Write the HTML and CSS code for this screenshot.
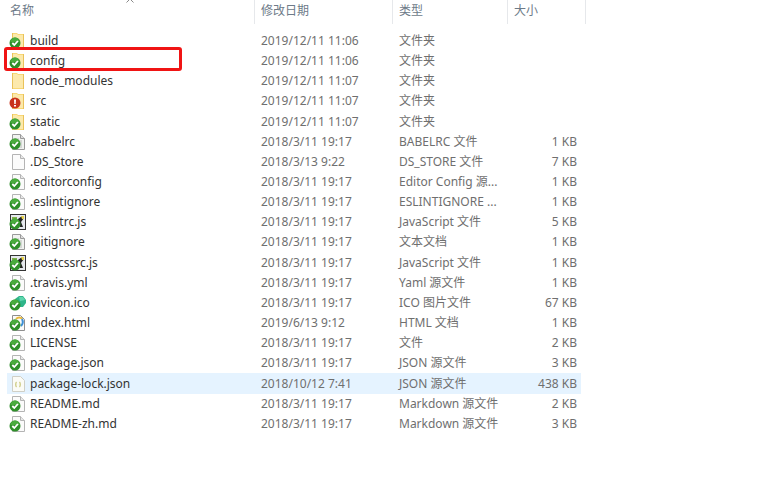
FILE: index.html
```html
<!DOCTYPE html>
<html lang="zh-CN">
<head>
  <meta charset="UTF-8" />
  <meta name="viewport" content="width=device-width, initial-scale=1.0"/>
  <title>文件列表</title>
  <link rel="stylesheet" href="styles.css">
</head>
<body>
  <svg class="defs" width="0" height="0">
    <symbol id="folder" viewBox="0 0 18 18">
      <path d="M3 1h5l1 1h6v15H3z" fill="#f8d775"/>
      <path d="M4 2h4l1 1h5v13H4z" fill="#fce9ac"/>
      <path d="M3 1h1v16H3zM14 2h1v15h-1z" fill="#e9c25a"/>
    </symbol>
    <symbol id="file" viewBox="0 0 18 18">
      <path d="M3.500 1.500h8l4 4v11h-12z" fill="#fbfbfb" stroke="#b4b4b4"/>
      <path d="M11.500 1.500v4h4" fill="#e8e8e8" stroke="#b4b4b4"/>
    </symbol>
    <symbol id="text" viewBox="0 0 18 18">
      <path d="M3.500 1.500h8l4 4v11h-12z" fill="#f1f3f1" stroke="#9a9a9a"/>
      <path d="M11.500 1.500v4h4" fill="#ddd" stroke="#9a9a9a"/>
      <path d="M6 6h4M6 8h7M6 10h7M6 12h7M6 14h7" stroke="#b9bdb9"/>
    </symbol>
    <symbol id="script" viewBox="0 0 18 18">
      <rect x="1.500" y="1.500" width="15" height="15" fill="#e6e9ee" stroke="#333"/>
      <path d="M9 6l4-3 2 2-3 4 2 5h-3l-2-4z" fill="#222"/>
      <path d="M12 3h3v3h-2z" fill="#e8d44d"/>
      <path d="M3 4h5v2H3z" fill="#7fb04b"/>
    </symbol>
    <symbol id="ico" viewBox="0 0 18 18">
      <path d="M6 5l4-3h4l3 4v3l-3 4H9z" fill="#2fb58a"/>
      <path d="M10 3h4l2 3-5 1z" fill="#5fd6ae"/>
    </symbol>
    <symbol id="html" viewBox="0 0 18 18">
      <path d="M3.500 1.500h8l4 4v11h-12z" fill="#fbfbfb" stroke="#8f8f8f"/>
      <path d="M7 5c2-2 5-2 6 0" fill="none" stroke="#e8b93a" stroke-width="2"/>
      <path d="M13 5c1 2 1 5-1 7" fill="none" stroke="#3d8fd6" stroke-width="2"/>
    </symbol>
    <symbol id="lock" viewBox="0 0 18 18">
      <path d="M3.500 1.500h8l4 4v11h-12z" fill="#fbfbf6" stroke="#cfcfc6"/>
      <path d="M7.500 7c-1 1-1 4 0 5M10.500 7c1 1 1 4 0 5" fill="none" stroke="#c9c779" stroke-width="1.200"/>
    </symbol>
    <symbol id="ok" viewBox="0 0 18 18">
      <circle cx="6" cy="11" r="5.500" fill="#2f8f2a"/>
      <path d="M1.500 10a4.500 4.500 0 0 1 9 0z" fill="#49ab3d"/>
      <path d="M3.300 11l2 2 3.600-4" fill="none" stroke="#fff" stroke-width="1.800"/>
    </symbol>
    <symbol id="err" viewBox="0 0 18 18">
      <circle cx="6" cy="11" r="5.500" fill="#c8341c"/>
      <path d="M5 7.500h2l-.3 4.500h-1.400zM5 13h2v1.600H5z" fill="#fff"/>
    </symbol>
  </svg>

  <svg class="sort-arrow" width="8" height="4" viewBox="0 0 8 4">
    <path d="M.5 3.500L4 0l3.500 3.500" fill="none" stroke="#8a8a8a"/>
  </svg>

  <div class="header">
    <div class="col col-name">名称</div>
    <div class="col col-date">修改日期</div>
    <div class="col col-type">类型</div>
    <div class="col col-size">大小</div>
  </div>

  <div class="list">
    <div class="row">
      <svg class="icon"><use href="#folder"/><use href="#ok"/></svg>
      <span class="name">build</span><span>2019/12/11 11:06</span><span>文件夹</span><span class="size"></span>
    </div>
    <div class="row row-marked">
      <svg class="icon"><use href="#folder"/><use href="#ok"/></svg>
      <span class="name">config</span><span>2019/12/11 11:06</span><span>文件夹</span><span class="size"></span>
    </div>
    <div class="row">
      <svg class="icon"><use href="#folder"/></svg>
      <span class="name">node_modules</span><span>2019/12/11 11:07</span><span>文件夹</span><span class="size"></span>
    </div>
    <div class="row">
      <svg class="icon"><use href="#folder"/><use href="#err"/></svg>
      <span class="name">src</span><span>2019/12/11 11:07</span><span>文件夹</span><span class="size"></span>
    </div>
    <div class="row">
      <svg class="icon"><use href="#folder"/><use href="#ok"/></svg>
      <span class="name">static</span><span>2019/12/11 11:07</span><span>文件夹</span><span class="size"></span>
    </div>
    <div class="row">
      <svg class="icon"><use href="#text"/><use href="#ok"/></svg>
      <span class="name">.babelrc</span><span>2018/3/11 19:17</span><span>BABELRC 文件</span><span class="size">1 KB</span>
    </div>
    <div class="row">
      <svg class="icon"><use href="#file"/></svg>
      <span class="name">.DS_Store</span><span>2018/3/13 9:22</span><span>DS_STORE 文件</span><span class="size">7 KB</span>
    </div>
    <div class="row">
      <svg class="icon"><use href="#file"/><use href="#ok"/></svg>
      <span class="name">.editorconfig</span><span>2018/3/11 19:17</span><span>Editor Config 源...</span><span class="size">1 KB</span>
    </div>
    <div class="row">
      <svg class="icon"><use href="#file"/><use href="#ok"/></svg>
      <span class="name">.eslintignore</span><span>2018/3/11 19:17</span><span>ESLINTIGNORE ...</span><span class="size">1 KB</span>
    </div>
    <div class="row">
      <svg class="icon"><use href="#script"/><use href="#ok"/></svg>
      <span class="name">.eslintrc.js</span><span>2018/3/11 19:17</span><span>JavaScript 文件</span><span class="size">5 KB</span>
    </div>
    <div class="row">
      <svg class="icon"><use href="#text"/><use href="#ok"/></svg>
      <span class="name">.gitignore</span><span>2018/3/11 19:17</span><span>文本文档</span><span class="size">1 KB</span>
    </div>
    <div class="row">
      <svg class="icon"><use href="#script"/><use href="#ok"/></svg>
      <span class="name">.postcssrc.js</span><span>2018/3/11 19:17</span><span>JavaScript 文件</span><span class="size">1 KB</span>
    </div>
    <div class="row">
      <svg class="icon"><use href="#file"/><use href="#ok"/></svg>
      <span class="name">.travis.yml</span><span>2018/3/11 19:17</span><span>Yaml 源文件</span><span class="size">1 KB</span>
    </div>
    <div class="row">
      <svg class="icon"><use href="#ico"/><use href="#ok"/></svg>
      <span class="name">favicon.ico</span><span>2018/3/11 19:17</span><span>ICO 图片文件</span><span class="size">67 KB</span>
    </div>
    <div class="row">
      <svg class="icon"><use href="#html"/><use href="#ok"/></svg>
      <span class="name">index.html</span><span>2019/6/13 9:12</span><span>HTML 文档</span><span class="size">1 KB</span>
    </div>
    <div class="row">
      <svg class="icon"><use href="#file"/><use href="#ok"/></svg>
      <span class="name">LICENSE</span><span>2018/3/11 19:17</span><span>文件</span><span class="size">2 KB</span>
    </div>
    <div class="row">
      <svg class="icon"><use href="#file"/><use href="#ok"/></svg>
      <span class="name">package.json</span><span>2018/3/11 19:17</span><span>JSON 源文件</span><span class="size">3 KB</span>
    </div>
    <div class="row row-selected">
      <svg class="icon"><use href="#lock"/></svg>
      <span class="name">package-lock.json</span><span>2018/10/12 7:41</span><span>JSON 源文件</span><span class="size">438 KB</span>
    </div>
    <div class="row">
      <svg class="icon"><use href="#file"/><use href="#ok"/></svg>
      <span class="name">README.md</span><span>2018/3/11 19:17</span><span>Markdown 源文件</span><span class="size">2 KB</span>
    </div>
    <div class="row">
      <svg class="icon"><use href="#file"/><use href="#ok"/></svg>
      <span class="name">README-zh.md</span><span>2018/3/11 19:17</span><span>Markdown 源文件</span><span class="size">3 KB</span>
    </div>
  </div>
</body>
</html>
```

FILE: styles.css
```css
* {
  margin: 0;
  padding: 0;
  box-sizing: border-box;
  font-family: "Noto Sans", "Noto Sans CJK SC", sans-serif;
}

body {
  position: relative;
  height: 478px;
  overflow: hidden;
  background: #fff;
  font-size: 12px;
  color: #6f6f6f;
}

.defs {
  position: absolute;
}

.sort-arrow {
  position: absolute;
  top: -1px;
  left: 126px;
}

.header {
  display: grid;
  grid-template-columns: 248px 138px 115px 78px;
  margin-left: 7px;
  height: 24px;
  color: #6d7a88;
}

.col {
  padding-left: 6px;
  line-height: 22px;
  border-right: 1px solid #e6e8eb;
}

.col-name {
  padding-left: 3px;
}

.list {
  margin: 6.81px 0 0 7px;
  width: 574px;
  display: grid;
  grid-auto-rows: 20.17px;
}

.row {
  position: relative;
  display: grid;
  grid-template-columns: 23px 231px 138px 1fr auto;
  align-items: center;
  padding-right: 4px;
  white-space: nowrap;
  line-height: 20px;
}

.icon {
  width: 18px;
  height: 18px;
  margin-left: 2px;
}

.name {
  color: #333;
}

.size {
  text-align: right;
}

.row-selected {
  background: #e5f3ff;
}

/* red annotation drawn over the config row */
.row-marked::after {
  content: '';
  box-sizing: border-box;
  position: absolute;
  top: -4px;
  left: -3px;
  width: 178px;
  height: 24px;
  border: 3px solid #f01414;
  border-radius: 3px;
}
```
